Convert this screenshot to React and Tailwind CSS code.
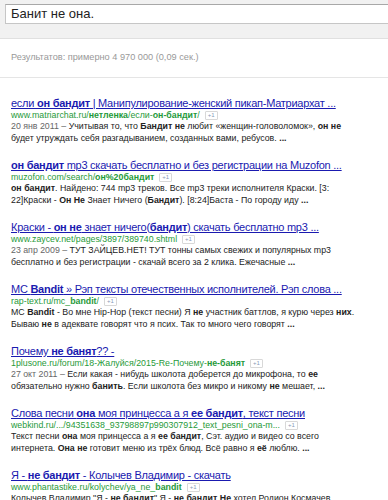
import React from "react";

const results = [
  {
    title: [["если "], ["он бандит", 1], [" | Манипулирование-женский пикап-Матриархат ..."]],
    url: [["www.matriarchat.ru/"], ["нетленка", 1], ["/если-"], ["он-бандит", 1], ["/"]],
    date: "20 янв 2011 – ",
    lines: [
      [["Учитывая то, что "], ["Бандит не", 1], [" любит «женщин-головоломок», "], ["он не", 1]],
      [["будет утруждать себя разгадыванием, созданных вами, ребусов. "], ["...", 1]],
    ],
  },
  {
    title: [["он бандит", 1], [" mp3 скачать бесплатно и без регистрации на Muzofon ..."]],
    url: [["muzofon.com/search/"], ["он%20бандит", 1]],
    lines: [
      [["он бандит", 1], [". Найдено: 744 mp3 треков. Все mp3 треки исполнителя Краски. [3:"]],
      [["22]Краски - "], ["Он Не", 1], [" Знает Ничего ("], ["Бандит", 1], ["). [8:24]Баста - По городу иду "], ["...", 1]],
    ],
  },
  {
    title: [["Краски - "], ["он не", 1], [" знает ничего("], ["бандит", 1], [") скачать бесплатно mp3 ..."]],
    url: [["www.zaycev.net/pages/3897/389740.shtml"]],
    date: "23 апр 2009 – ",
    lines: [
      [["ТУТ ЗАЙЦЕВ.НЕТ! ТУТ тонны самых свежих и популярных mp3"]],
      [["бесплатно и без регистрации - скачай всего за 2 клика. Ежечасные "], ["...", 1]],
    ],
  },
  {
    title: [["MC "], ["Bandit", 1], [" » Рэп тексты отечественных исполнителей. Рэп слова ..."]],
    url: [["rap-text.ru/mc_"], ["bandit", 1], ["/"]],
    lines: [
      [["MC "], ["Bandit", 1], [" - Во мне Hip-Hop (текст песни) Я "], ["не", 1], [" участник баттлов, я курю через "], ["них", 1], ["."]],
      [["Бываю "], ["не", 1], [" в адеквате говорят что я псих. Так то много чего говорят "], ["...", 1]],
    ],
  },
  {
    title: [["Почему "], ["не банят", 1], ["?? -"]],
    url: [["1plusone.ru/forum/18-Жалуйся/2015-Re-Почему-"], ["не-банят", 1]],
    date: "27 окт 2011 – ",
    lines: [
      [["Если какая - нибудь школота доберется до микрофона, то "], ["ее", 1]],
      [["обязательно нужно "], ["банить", 1], [". Если школота без микро и никому "], ["не", 1], [" мешает, "], ["...", 1]],
    ],
  },
  {
    title: [["Слова песни "], ["она", 1], [" моя принцесса а я "], ["ее бандит", 1], [", текст песни"]],
    url: [["webkind.ru/.../94351638_93798897p990307912_text_pesni_ona-m..."]],
    lines: [
      [["Текст песни "], ["она", 1], [" моя принцесса а я "], ["ее бандит", 1], [", Сэт. аудио и видео со всего"]],
      [["интернета. "], ["Она не", 1], [" готовит меню из трёх блюд. Всё равно я "], ["её", 1], [" люблю. "], ["...", 1]],
    ],
  },
  {
    title: [["Я - "], ["не бандит", 1], [" - Колычев Владимир - скачать"]],
    url: [["www.phantastike.ru/kolychev/ya_ne_"], ["bandit", 1]],
    lines: [
      [["Колычев Владимир \"Я - "], ["не бандит", 1], ["\" Я - "], ["не бандит Не", 1], [" хотел Родион Космачев"]],
      [["становиться бандитом. И так ее прежнему уже шесть лет осень. Теперь "], ["он", 1]],
    ],
  },
];

const renderParts = (parts) =>
  parts.map(([text, bold], i) =>
    bold ? (
      <b key={i} className="font-bold">
        {text}
      </b>
    ) : (
      <span key={i}>{text}</span>
    )
  );

const App = () => {
  return (
    <div className="w-[388px] h-[500px] overflow-hidden bg-white font-['Liberation_Sans',Arial,sans-serif]">
      <div className="h-[39px] bg-[#f1f1f1] border-b border-[#e0e0e0] pl-[5px] pt-[4px]">
        <div className="h-[20px] bg-white border border-r-0 border-[#c6c6c6] border-t-[#a8a8a8] pl-[5px] text-[13px] leading-[18px] text-[#222]">
          Банит не она.
        </div>
      </div>
      <div className="h-[39px] border-b border-[#e5e5e5] pl-[11px] flex items-center text-[9.2px] text-[#999]">
        Результатов: примерно 4 970 000 (0,09 сек.)
      </div>
      <div className="pl-[11px] pt-[20px] flex flex-col">
        {results.map((r, i) => (
          <div key={i} className="h-[62px] shrink-0 whitespace-nowrap">
            <div className="h-[11.5px] text-[11px] tracking-[-0.25px] leading-[11.5px] text-[#1a1ab0] underline underline-offset-[1px]">
              {renderParts(r.title)}
            </div>
            <div className="h-[11.5px] flex items-center gap-[5px] text-[8.8px] leading-[11.5px] text-[#1f9a3a]">
              <span>{renderParts(r.url)}</span>
              <span className="h-[9px] px-[2px] border border-[#d8d8d8] rounded-[1px] text-[6px] leading-[7px] text-[#8a9ab8] flex items-center">
                +1
              </span>
            </div>
            <div className="text-[8.8px] leading-[11.5px] text-[#222]">
              {r.lines.map((line, j) => (
                <div key={j} className="h-[11.5px]">
                  {j === 0 && r.date && <span className="text-[#666]">{r.date}</span>}
                  {renderParts(line)}
                </div>
              ))}
            </div>
          </div>
        ))}
      </div>
    </div>
  );
};

export default App;
